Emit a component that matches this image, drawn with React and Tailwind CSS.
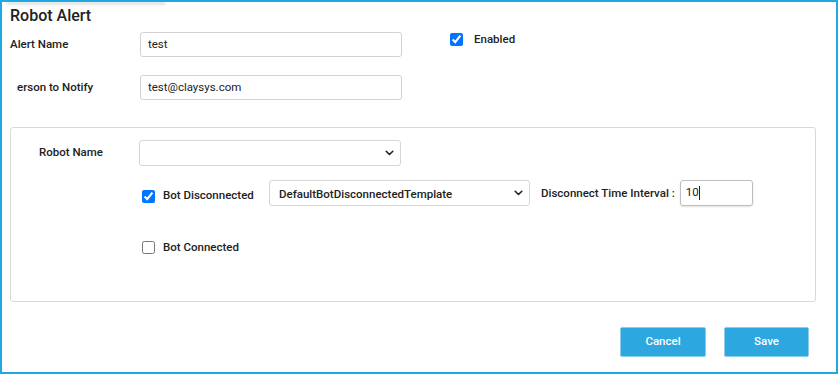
import React from "react";

const font = { fontFamily: "Roboto, 'Noto Sans', sans-serif" };

function Chevron() {
  return (
    <svg width="9" height="6" viewBox="0 0 9 6" fill="none">
      <path d="M1.2 1.3L4.5 4.5L7.8 1.3" stroke="#222" strokeWidth="1.6" strokeLinecap="round" strokeLinejoin="round" />
    </svg>
  );
}

function Check({ checked, extra = "" }) {
  return (
    <input
      type="checkbox"
      defaultChecked={checked}
      className={"m-0 w-[13px] h-[13px] shrink-0 " + extra}
    />
  );
}

export default function App() {
  return (
    <div
      style={font}
      className="relative w-[838px] h-[374px] border-[2px] border-[#1ea9e2] bg-white text-[#222] overflow-hidden"
    >
      <div className="absolute top-0 left-[4px] w-[160px] h-[4px] bg-gradient-to-b from-[#d4d4d4] to-transparent rounded-full blur-[1px]" />

      <div className="pl-[8px] pt-[4px] h-[24px] text-[16px] leading-[20px] font-medium">Robot Alert</div>

      <div className="mt-[6px] pl-[8px] flex items-start">
        <div className="w-[130px] h-[25px] flex items-center text-[11.5px] font-medium">Alert Name</div>
        <div className="w-[262px] h-[25px] border border-[#d2d2d2] rounded-[3px] flex items-center px-[7px] text-[11.5px]">test</div>
        <div className="ml-[48px] -mt-[1px] flex items-center gap-[11px]">
          <Check checked />
          <span className="text-[11.5px] font-medium">Enabled</span>
        </div>
      </div>

      <div className="mt-[18px] pl-[8px] flex items-start">
        <div className="w-[130px] h-[25px] flex items-center text-[11.5px] font-medium pl-[7px]">erson to Notify</div>
        <div className="w-[262px] h-[25px] border border-[#d2d2d2] rounded-[3px] flex items-center px-[7px] text-[11.5px]">test@claysys.com</div>
      </div>

      <div className="mt-[27px] ml-[8px] w-[806px] h-[175px] border border-[#d8d8d8] rounded-[3px] pt-[12px] pl-[28px]">
        <div className="flex items-center">
          <div className="w-[100px] text-[11.5px] font-medium">Robot Name</div>
          <div className="w-[262px] h-[26px] border border-[#d6d6d6] rounded-[3px] flex items-center justify-end pr-[6px]">
            <Chevron />
          </div>
        </div>

        <div className="mt-[14px] flex items-center h-[26px]">
          <div className="w-[103px]" />
          <Check checked extra="mt-[6px]" />
          <span className="ml-[8px] mt-[5px] w-[98px] text-[11.5px] font-medium">Bot Disconnected</span>
          <div className="ml-[8px] w-[261px] h-[26px] border border-[#d6d6d6] rounded-[3px] flex items-center justify-between pl-[9px] pr-[6px] text-[11.5px] font-medium">
            <span className="mt-[4px]">DefaultBotDisconnectedTemplate</span>
            <Chevron />
          </div>
          <span className="ml-[11px] mt-[2px] text-[11.5px] font-medium">Disconnect Time Interval :</span>
          <div className="ml-[5px] w-[73px] h-[26px] border border-[#bdbdbd] rounded-[3px] shadow-[0_1px_2px_rgba(0,0,0,0.12)] flex items-center pl-[5px] text-[11.5px]">
            <span>10</span>
            <span className="w-px h-[14px] bg-[#222]" />
          </div>
        </div>

        <div className="mt-[35px] flex items-center h-[13px]">
          <div className="w-[103px]" />
          <Check />
          <span className="ml-[8px] text-[11.5px] font-medium">Bot Connected</span>
        </div>
      </div>

      <div className="mt-[25px] pr-[27px] flex justify-end gap-[18px]">
        <button className="w-[86px] h-[30px] rounded-[2px] bg-[#2ca7df] border border-[#8ccbea] text-white text-[11.5px] font-medium">Cancel</button>
        <button className="w-[85px] h-[30px] rounded-[2px] bg-[#2ca7df] border border-[#8ccbea] text-white text-[11.5px] font-medium">Save</button>
      </div>
    </div>
  );
}
